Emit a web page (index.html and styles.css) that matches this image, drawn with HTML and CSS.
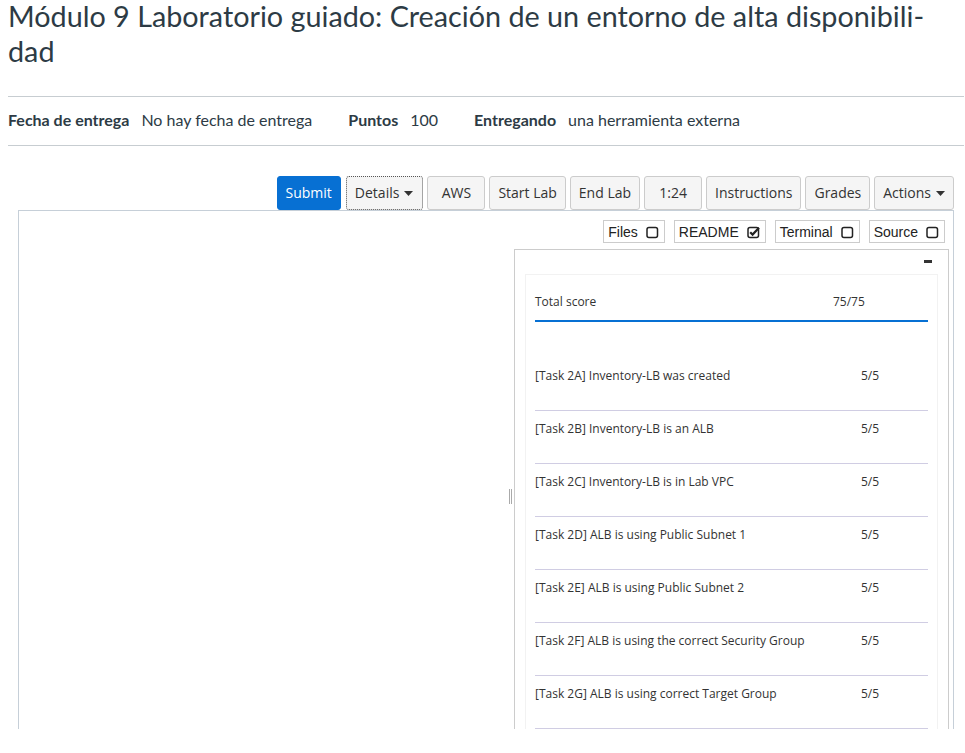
FILE: index.html
```html
<!DOCTYPE html>
<html lang="es">
<head>
<meta charset="utf-8">
<title>Módulo 9 Laboratorio guiado</title>
<link rel="stylesheet" href="styles.css">
</head>
<body>
<div class="page">
  <h1 class="title">Módulo 9 Laboratorio guiado: Creación de un entorno de alta disponibili-<br>dad</h1>
  <div class="meta">
    <div class="meta-item"><span class="meta-label">Fecha de entrega</span><span class="meta-value">No hay fecha de entrega</span></div>
    <div class="meta-item"><span class="meta-label">Puntos</span><span class="meta-value">100</span></div>
    <div class="meta-item"><span class="meta-label">Entregando</span><span class="meta-value">una herramienta externa</span></div>
  </div>

  <div class="toolbar">
    <button class="btn btn-primary">Submit</button>
    <button class="btn btn-focus">Details <svg class="caret" width="9" height="5" viewBox="0 0 9 5"><polygon points="0,0 9,0 4.5,5" fill="#333"/></svg></button>
    <button class="btn btn-fixed">AWS</button>
    <button class="btn">Start Lab</button>
    <button class="btn">End Lab</button>
    <button class="btn btn-fixed">1:24</button>
    <button class="btn">Instructions</button>
    <button class="btn">Grades</button>
    <button class="btn">Actions <svg class="caret" width="9" height="5" viewBox="0 0 9 5"><polygon points="0,0 9,0 4.5,5" fill="#333"/></svg></button>
  </div>

  <div class="frame">
    <div class="tabs">
      <label class="tab">Files <svg class="cb" width="13" height="13" viewBox="0 0 13 13"><rect x="1" y="1.5" width="10.5" height="10" rx="2" fill="none" stroke="#222" stroke-width="1.5"/></svg></label>
      <label class="tab">README <svg class="cb" width="13" height="13" viewBox="0 0 13 13"><rect x="1" y="1.5" width="10.5" height="10" rx="2" fill="none" stroke="#222" stroke-width="1.5"/><path d="M3.2 6.2 L5.6 8.6 L12 1.8" fill="none" stroke="#222" stroke-width="2.2"/></svg></label>
      <label class="tab">Terminal <svg class="cb" width="13" height="13" viewBox="0 0 13 13"><rect x="1" y="1.5" width="10.5" height="10" rx="2" fill="none" stroke="#222" stroke-width="1.5"/></svg></label>
      <label class="tab">Source <svg class="cb" width="13" height="13" viewBox="0 0 13 13"><rect x="1" y="1.5" width="10.5" height="10" rx="2" fill="none" stroke="#222" stroke-width="1.5"/></svg></label>
    </div>
    <div class="frame-body">
      <div class="left-pane"></div>
      <div class="handle"><span class="grip"></span></div>
      <div class="panel">
        <div class="panel-head"><span class="collapse"></span></div>
        <div class="card">
          <div class="row total"><span>Total score</span><span>75/75</span></div>
          <div class="row task first"><span>[Task 2A] Inventory-LB was created</span><span>5/5</span></div>
          <div class="row task"><span>[Task 2B] Inventory-LB is an ALB</span><span>5/5</span></div>
          <div class="row task"><span>[Task 2C] Inventory-LB is in Lab VPC</span><span>5/5</span></div>
          <div class="row task"><span>[Task 2D] ALB is using Public Subnet 1</span><span>5/5</span></div>
          <div class="row task"><span>[Task 2E] ALB is using Public Subnet 2</span><span>5/5</span></div>
          <div class="row task"><span>[Task 2F] ALB is using the correct Security Group</span><span>5/5</span></div>
          <div class="row task"><span>[Task 2G] ALB is using correct Target Group</span><span>5/5</span></div>
        </div>
      </div>
    </div>
  </div>
</div>
</body>
</html>
```

FILE: styles.css
```css
* { box-sizing: border-box; }
html, body { margin: 0; padding: 0; background: #fff; }
body { font-family: Lato, "Open Sans", sans-serif; color: #2d3b45; overflow: hidden; }

.page { margin-left: 8px; width: 956px; }

.title {
  margin: -1px 0 0 0;
  font-family: Lato, sans-serif;
  font-weight: 400;
  font-size: 28.75px;
  line-height: 35px;
  color: #2d3b45;
}

.meta {
  margin-top: 27px;
  border-top: 1px solid #c7cdd1;
  border-bottom: 1px solid #c7cdd1;
  padding: 11px 0 13px;
  display: flex;
  gap: 36px;
  font-size: 16px;
  line-height: 24px;
}
.meta-item { display: flex; gap: 12px; }
.meta-label { font-weight: 700; }

.toolbar {
  margin-top: 30px;
  margin-right: 10px;
  display: flex;
  justify-content: flex-end;
  gap: 4px;
}
.btn {
  font-family: "Open Sans", sans-serif;
  font-size: 14px;
  line-height: 20px;
  padding: 6px 8px;
  height: 34px;
  border: 1px solid #ccc;
  border-radius: 3px;
  background: #f5f5f5;
  color: #333;
  display: flex;
  align-items: center;
  justify-content: center;
  gap: 5px;
}
.btn-primary { background: #0770d3; border-color: #0770d3; color: #fff; margin-right: 1px; }
.btn-focus { border: 1px dotted #555; padding-right: 9px; }
.btn-fixed { min-width: 58px; }
.caret { display: block; margin-top: 1px; }

.frame {
  margin-left: 10px;
  margin-right: 10px;
  height: 519px;
  border: 1px solid #c6cfd8;
  border-bottom: none;
  overflow: hidden;
  display: flex;
  flex-direction: column;
}

.tabs {
  display: flex;
  justify-content: flex-end;
  gap: 9px;
  padding: 9px 8px 0 0;
}
.tab {
  display: flex;
  align-items: center;
  height: 23px;
  padding: 1px 5px 0 4px;
  border: 1px solid #ccc;
  font-family: "Liberation Sans", Arial, sans-serif;
  font-size: 14px;
  color: #222;
  background: #fff;
}
.cb { margin-left: 8px; display: block; }

.frame-body {
  margin-top: 6px;
  flex: 1;
  display: flex;
}
.left-pane { flex: 1; }
.handle {
  width: 5px;
  display: flex;
  align-items: center;
  padding-top: 12px;
}
.grip {
  display: block;
  width: 3px;
  height: 15px;
  border-left: 1px solid #aaa;
  border-right: 1px solid #aaa;
}

.panel {
  width: 435px;
  margin-right: 4px;
  border: 1px solid #ccc;
  padding: 0 10px;
}
.panel-head {
  height: 24px;
  display: flex;
  justify-content: flex-end;
  align-items: flex-start;
  padding: 10px 6px 0 0;
}
.collapse {
  display: block;
  width: 8px;
  height: 3px;
  background: #333;
}

.card {
  border: 1px solid #f2f2f2;
  padding: 0 9px 0 9px;
  font-family: "Open Sans", sans-serif;
  font-size: 12px;
  line-height: 17px;
  color: #333;
}
.row { display: grid; }
.total {
  grid-template-columns: 298px 1fr;
  padding: 18px 0 10px;
  border-bottom: 2px solid #0770d3;
}
.task {
  grid-template-columns: 326px 1fr;
  padding: 9px 0 26px;
  border-bottom: 1px solid #d0cde3;
}
.task.first { margin-top: 36px; }
```
